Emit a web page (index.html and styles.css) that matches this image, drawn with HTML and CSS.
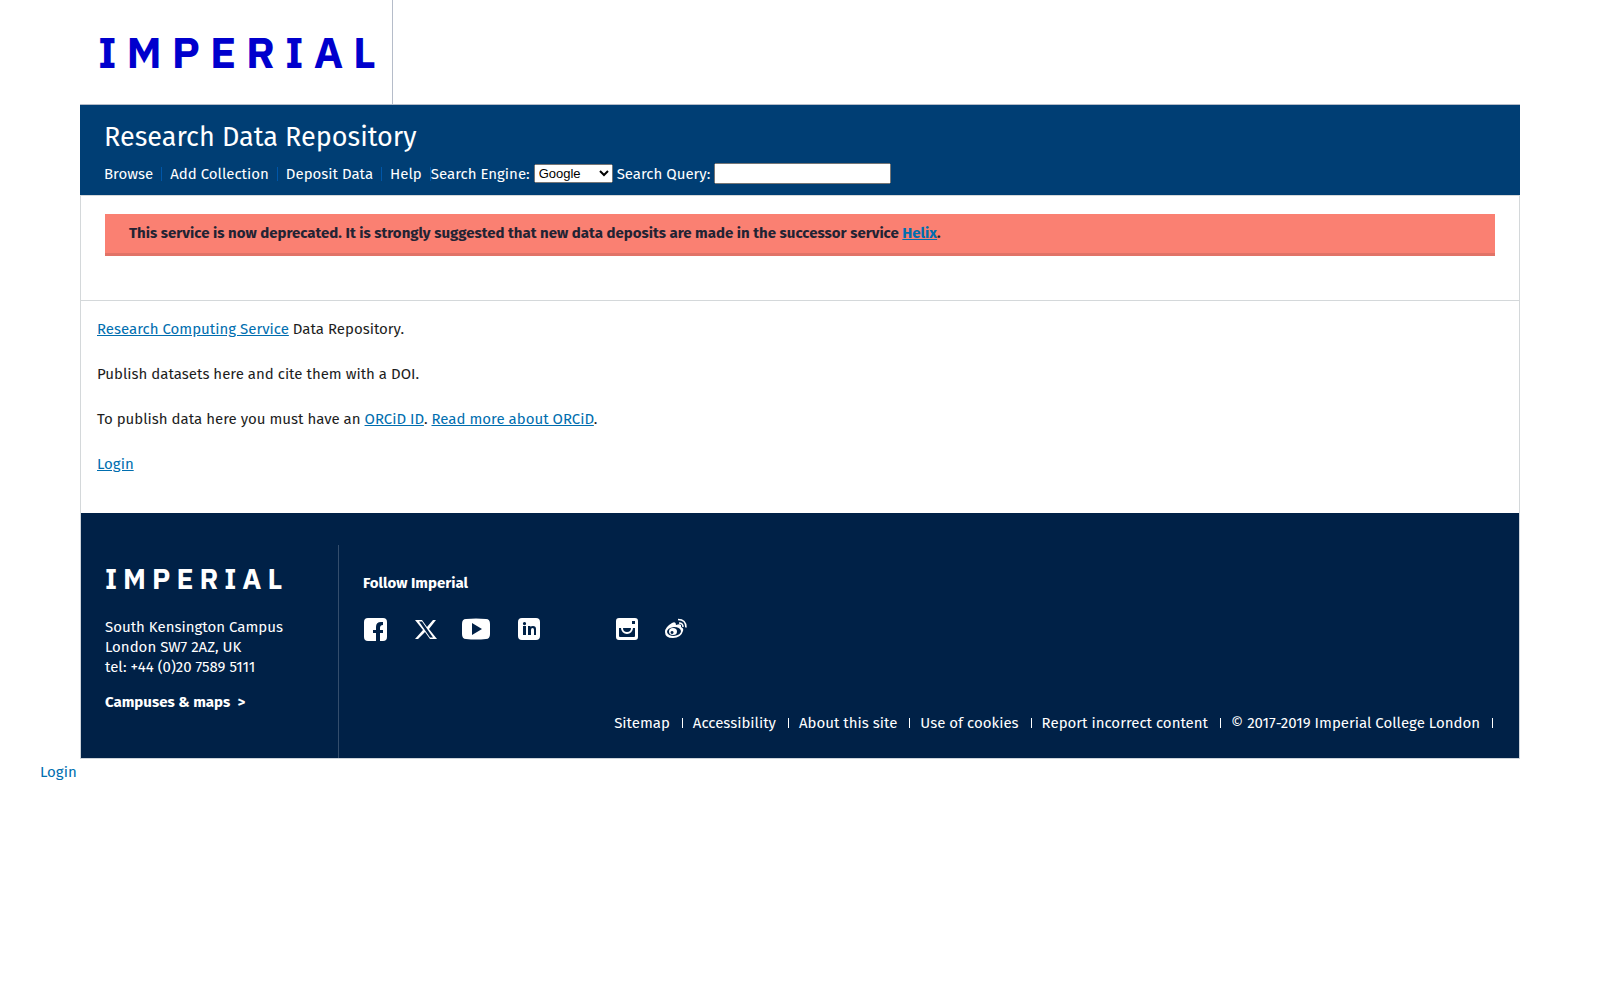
FILE: index.html
```
<!DOCTYPE html>
<html lang="en">
<head>
  <meta charset="UTF-8">
  <meta name="viewport" content="width=device-width, initial-scale=1.0">
  <title>Research Data Repository</title>
  <link rel="stylesheet" href="styles.css">
</head>
<body>
  <div class="wrapper">
    <header class="header">
      <a href="#" class="logo">IMPERIAL</a>
    </header>

    <div class="banner">
      <h1>Research Data Repository</h1>
      <div class="toolbar">
        <nav>
          <ul class="menu">
            <li><a href="#">Browse</a></li>
            <li><a href="#">Add Collection</a></li>
            <li><a href="#">Deposit Data</a></li>
            <li><a href="#">Help</a></li>
          </ul>
        </nav>
        <form class="search">
          <label for="engine">Search Engine:</label>
          <select id="engine">
            <option>Google</option>
            <option>DataCite</option>
          </select>
          <label for="query">Search Query:</label>
          <input type="text" id="query">
        </form>
      </div>
    </div>

    <div class="notice">
      <p class="alert">This service is now deprecated. It is strongly suggested that new data deposits are made in the successor service <a href="#">Helix</a>.</p>
    </div>

    <main class="content">
      <p><a href="#">Research Computing Service</a> Data Repository.</p>
      <p>Publish datasets here and cite them with a DOI.</p>
      <p>To publish data here you must have an <a href="#">ORCiD ID</a>. <a href="#">Read more about ORCiD</a>.</p>
      <p><a href="#">Login</a></p>
    </main>

    <footer class="footer">
      <div class="contact">
        <a href="#" class="logo-small">IMPERIAL</a>
        <address>
          South Kensington Campus<br>
          London SW7 2AZ, UK<br>
          tel: +44 (0)20 7589 5111
        </address>
        <a href="#" class="campuses">Campuses &amp; maps &nbsp;&gt;</a>
      </div>
      <div class="footer-main">
        <h2>Follow Imperial</h2>
        <ul class="social">
          <li>
            <a href="#" aria-label="Facebook">
              <svg width="28" height="24" viewBox="0 0 28 24"><path fill-rule="evenodd" d="M5 1h15q4 0 4 4v15q0 4-4 4h-3v-8h3v-3h-3v-2q0-3 3-3V5h-2q-5 0-5 5v3h-3v3h3v8H5q-4 0-4-4V5q0-4 4-4z"/></svg>
            </a>
          </li>
          <li>
            <a href="#" aria-label="X">
              <svg width="28" height="24" viewBox="0 0 28 24"><path fill-rule="evenodd" d="M3 3h7l5 7 6-7h3l-7 9 8 10h-7l-5-7-7 7H3l8-9zM7 4.500l11 16h3l-11-16z"/></svg>
            </a>
          </li>
          <li class="wide">
            <a href="#" aria-label="YouTube">
              <svg width="32" height="24" viewBox="0 0 32 24"><path fill-rule="evenodd" d="M5 2q10-1 20 0 4 0 4 5v10q0 5-4 5-10 1-20 0-4 0-4-5V7q0-5 4-5zM11 6v12l10-6z"/></svg>
            </a>
          </li>
          <li>
            <a href="#" aria-label="LinkedIn">
              <svg width="28" height="24" viewBox="0 0 28 24"><path fill-rule="evenodd" d="M8 1h14q4 0 4 4v14q0 4-4 4H8q-4 0-4-4V5q0-4 4-4zM9 9v9h3V9zM10.500 5a1.600 1.600 0 1 0 .01 0zM14 9v9h3v-5q0-2 1.500-2t1.500 2v5h2v-6q0-3-3-3-2 0-2.500 1V9z"/></svg>
            </a>
          </li>
          <li></li>
          <li>
            <a href="#" aria-label="Instagram">
              <svg width="28" height="24" viewBox="0 0 28 24"><path fill-rule="evenodd" d="M7 1h16q3 0 3 3v16q0 3-3 3H7q-3 0-3-3V4q0-3 3-3zM20 4v3h3V4zM7 11v8q0 1 1 1h14q1 0 1-1v-8h-2a6 6 0 1 1-12 0zM11 11h8a4 4 0 1 1-8 0z"/></svg>
            </a>
          </li>
          <li>
            <a href="#" aria-label="Weibo">
              <svg width="28" height="24" viewBox="0 0 28 24"><path fill-rule="evenodd" d="M11 6q4-2 4 2 6-2 5 2 3 1 2 4-2 7-10 7-8 0-8-6 0-5 7-9zM13 10q-7 1-7 5 1 4 7 4 7-1 7-5-1-4-7-4zM12 11a4 3.500 0 1 1 0 7 4 3.500 0 0 1 0-7zM11 14a1.500 1.500 0 1 0 .1 0z"/><path class="wave" d="M17 2.500q8 0 8 8M18 6q4 0 4 4"/></svg>
            </a>
          </li>
        </ul>
        <ul class="legal">
          <li><a href="#">Sitemap</a></li>
          <li><a href="#">Accessibility</a></li>
          <li><a href="#">About this site</a></li>
          <li><a href="#">Use of cookies</a></li>
          <li><a href="#">Report incorrect content</a></li>
          <li>© 2017-2019 Imperial College London</li>
        </ul>
      </div>
    </footer>
  </div>
  <a href="#" class="login">Login</a>
</body>
</html>
```
FILE: styles.css
```
* {
  box-sizing: border-box;
}
body {
  font-family: "Fira Sans", "Noto Sans", sans-serif;
  font-size: 15px;
  line-height: 20px;
  color: #1d1d1d;
  background-color: #fff;
  margin: 0;
}
h1, h2, p, ul {
  margin: 0;
  padding: 0;
}
ul {
  list-style: none;
}
a {
  color: #006eaf;
}
.wrapper {
  margin: 0 5%;
}
.header {
  display: flex;
  border-bottom: 1px solid #b5bcc9;
}
.logo, .logo-small {
  font-family: "IBM Plex Sans", "DejaVu Sans Mono", monospace;
  font-weight: bold;
  text-decoration: none;
}
.logo {
  padding: 26px 6px 26px 18px;
  border-right: 1px solid #b5bcc9;
  font-size: 43px;
  line-height: 52px;
  letter-spacing: 10px;
  color: #0000cd;
}
.banner {
  padding: 16px 24px 11px;
  background-color: #003e74;
  color: #fff;
}
.banner h1 {
  font-size: 27px;
  font-weight: normal;
  line-height: 32px;
}
.toolbar {
  display: flex;
  align-items: center;
  margin-top: 10px;
}
.menu {
  display: flex;
}
.menu li {
  margin-right: 8px;
  padding-right: 8px;
  border-right: 1px solid #0056a8;
  line-height: 14px;
}
.menu li:last-child {
  margin-right: 0;
}
.menu a {
  color: #fff;
  text-decoration: none;
}
.search {
  display: flex;
  align-items: center;
  gap: 4px;
}
.search select {
  width: 79px;
  height: 19px;
  font-family: "Liberation Sans", Arial, sans-serif;
  font-size: 13px;
}
.search input {
  width: 177px;
  height: 21px;
}
.notice {
  padding: 18px 24px 44px;
  border: 1px solid #d4d8da;
}
.alert {
  padding: 9px 24px 10px;
  border-bottom: 3px solid #e17367;
  background-color: #fa8072;
  color: #232333;
  font-weight: bold;
}
.content {
  display: flex;
  flex-direction: column;
  gap: 25px;
  padding: 18px 16px 39px;
  border: 1px solid #d4d8da;
  border-top: 0;
  border-bottom: 0;
}
.footer {
  display: flex;
  padding-top: 32px;
  border: 1px solid #ccd3da;
  border-top: 0;
  background-color: #002147;
  color: #fff;
}
.footer a {
  color: #fff;
  text-decoration: none;
}
.contact {
  width: 258px;
  padding: 18px 24px 46px;
  border-right: 1px solid #334d6c;
}
.logo-small {
  display: block;
  font-size: 28px;
  line-height: 32px;
  letter-spacing: 6px;
}
.contact address {
  margin: 22px 0 15px;
  font-style: normal;
}
.campuses {
  font-weight: bold;
}
.footer-main {
  flex: 1;
  display: flex;
  flex-direction: column;
  padding: 28px 26px 30px 24px;
}
.footer-main h2 {
  font-size: 15px;
  line-height: 20px;
}
.social {
  display: flex;
  gap: 21px;
  margin-top: 24px;
}
.social li {
  width: 28px;
  height: 24px;
}
.social .wide {
  width: 32px;
}
.social svg {
  display: block;
  fill: #fff;
}
.social .wave {
  fill: none;
  stroke: #fff;
  stroke-width: 1.5;
}
.legal {
  display: flex;
  justify-content: flex-end;
  align-items: center;
  margin-top: auto;
}
.legal li {
  margin-left: 10px;
  padding-right: 12px;
  border-right: 1px solid #fff;
  line-height: 10px;
}
.login {
  display: inline-block;
  margin: 3px 0 0 40px;
  text-decoration: none;
}
```
